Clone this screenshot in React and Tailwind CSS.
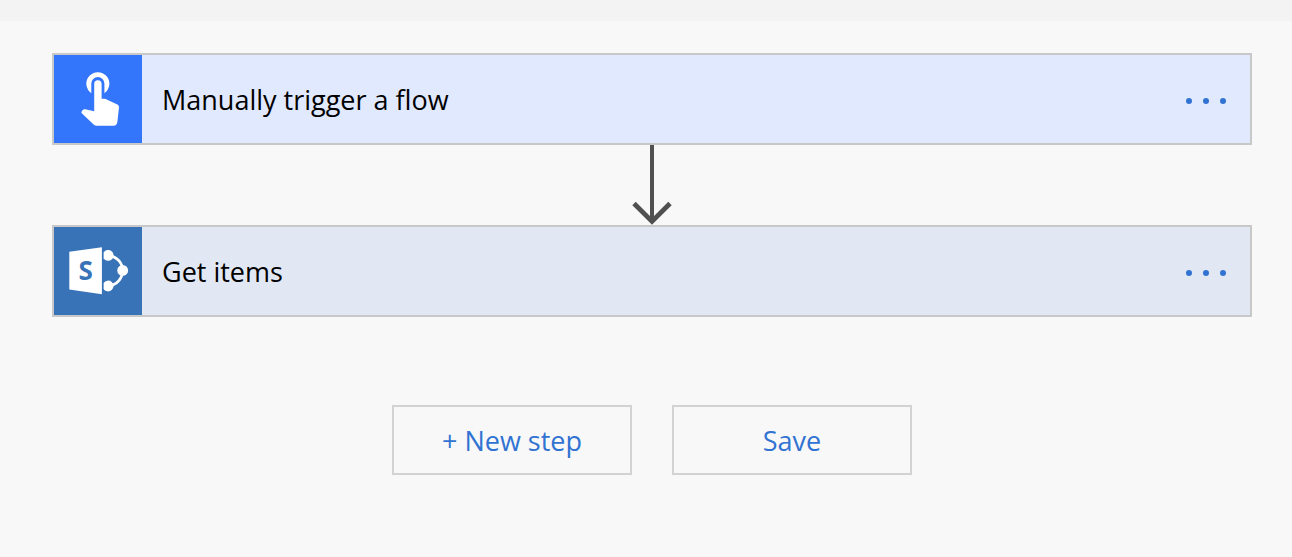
import React from "react";

function TouchIcon() {
  return (
    <svg viewBox="0 0 88 88" className="size-[88px] shrink-0 bg-[#3375fb]" fill="#fff" aria-hidden="true">
      <path d="M37.3 38.2A11.5 11.5 0 1 1 50.4 38.2V28.6A6.55 6.55 0 0 0 37.3 28.6V38.2Z" />
      <path d="M40.2 56.3V28.9A3.7 3.7 0 0 1 47.6 28.9V43.8H50.5Q51.6 43.8 52.7 44.4L63.4 49.6Q65.2 50.6 65 52.6L63.4 66.8Q62.8 70.7 59.6 70.7H43Q41 70.7 39.6 69.4L27.8 58.2Q26.9 57.2 27.8 56.2L29 54.8Q29.8 53.9 31.2 54.2Z" />
    </svg>
  );
}

function SharePointIcon() {
  return (
    <svg viewBox="0 0 88 88" className="size-[88px] shrink-0 bg-[#3873b8]" fill="#fff" aria-hidden="true">
      <path d="M15.3 24.8L47.9 20.2V67.2L15.3 62.6Z" />
      <path d="M54 28.3C64 29.5 68.7 37 68.7 43.5S64 58 54 59" fill="none" stroke="#fff" strokeWidth="2.7" />
      <path d="M49.6 25.4A5.4 5.4 0 1 1 49.6 31.2Z" />
      <path d="M49.6 56.1A5.4 5.4 0 1 1 49.6 61.9Z" />
      <circle cx="68.7" cy="43.4" r="5.4" />
      <text x="31.6" y="52.6" textAnchor="middle" fill="#3873b8" className="font-['Open_Sans',sans-serif] text-[26px] font-bold">
        S
      </text>
    </svg>
  );
}

function StepCard({ icon, title, tone }) {
  return (
    <section className={`flex items-center border-2 border-[#c8c8c8] ${tone}`}>
      {icon}
      <h2 className="min-w-0 flex-1 px-5 pt-0.5 text-[27px] leading-9 text-black">{title}</h2>
      <button type="button" aria-label={`More actions for ${title}`} className="mr-4 flex h-11 items-center gap-[11px] px-2 pt-1">
        <span className="size-[6px] rounded-full bg-[#3173d2]" />
        <span className="size-[6px] rounded-full bg-[#3173d2]" />
        <span className="size-[6px] rounded-full bg-[#3173d2]" />
      </button>
    </section>
  );
}

function Arrow() {
  return (
    <svg viewBox="0 0 40 80" className="mx-auto h-20 w-10" fill="none" stroke="#505050" aria-hidden="true">
      <path d="M20 0V76" strokeWidth="4" />
      <path d="M2 58.5L20 76.4L38 58.5" strokeWidth="4.8" />
    </svg>
  );
}

function ActionButton({ children }) {
  return (
    <button type="button" className="h-[70px] w-60 border-2 border-[#d2d2d2] pt-0.5 text-[27px] leading-9 text-[#3173d2]">
      {children}
    </button>
  );
}

export default function App() {
  return (
    <div className="flex min-h-screen flex-col bg-[#f8f8f8] font-['Open_Sans','Noto_Sans',sans-serif]">
      <header className="h-[21px] bg-[#f3f3f3]" />
      <main className="pt-8 pr-10 pb-8 pl-[52px]">
        <StepCard icon={<TouchIcon />} title="Manually trigger a flow" tone="bg-[#e1e9ff]" />
        <Arrow />
        <StepCard icon={<SharePointIcon />} title="Get items" tone="bg-[#e1e8f4]" />
        <div className="mt-[88px] flex flex-wrap justify-center gap-10">
          <ActionButton>+ New step</ActionButton>
          <ActionButton>Save</ActionButton>
        </div>
      </main>
    </div>
  );
}
